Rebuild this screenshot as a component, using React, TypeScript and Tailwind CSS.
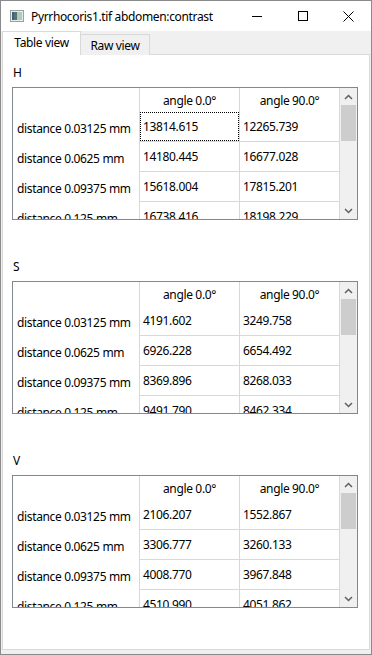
import React from "react";

type Sec = { label: string; rows: [string, string, string][] };

const sections: Sec[] = [
  {
    label: "H",
    rows: [
      ["distance 0.03125 mm", "13814.615", "12265.739"],
      ["distance 0.0625 mm", "14180.445", "16677.028"],
      ["distance 0.09375 mm", "15618.004", "17815.201"],
      ["distance 0.125 mm", "16738.416", "18198.229"],
    ],
  },
  {
    label: "S",
    rows: [
      ["distance 0.03125 mm", "4191.602", "3249.758"],
      ["distance 0.0625 mm", "6926.228", "6654.492"],
      ["distance 0.09375 mm", "8369.896", "8268.033"],
      ["distance 0.125 mm", "9491.790", "8462.334"],
    ],
  },
  {
    label: "V",
    rows: [
      ["distance 0.03125 mm", "2106.207", "1552.867"],
      ["distance 0.0625 mm", "3306.777", "3260.133"],
      ["distance 0.09375 mm", "4008.770", "3967.848"],
      ["distance 0.125 mm", "4510.990", "4051.862"],
    ],
  },
];

function Table({ sec, focus }: { sec: Sec; focus: boolean }) {
  return (
    <div className="flex h-[133px] w-[346px] border border-[#828790] bg-white overflow-hidden">
      <div className="flex flex-col w-[327px] overflow-hidden">
        <div className="flex h-[24px] shrink-0">
          <div className="w-[127px] border-r border-[#d8d8d8]" />
          <div className="w-[100px] border-r border-[#d8d8d8] flex items-center justify-center pt-[2px]">angle 0.0°</div>
          <div className="w-[100px] border-r border-[#d8d8d8] flex items-center justify-center pt-[2px]">angle 90.0°</div>
        </div>
        {sec.rows.map((r, i) => (
          <div key={i} className="flex h-[30px] shrink-0">
            <div className="w-[127px] border-r border-[#d8d8d8] flex items-center pl-[4px] pt-[3px] whitespace-nowrap">{r[0]}</div>
            <div className="w-[100px] border-r border-b border-[#d8d8d8] relative flex items-center pl-[3px] pt-[1px]">
              {focus && i === 0 && (
                <div className="absolute left-0 top-0 w-[99px] h-[29px] border border-dotted border-black" />
              )}
              {r[1]}
            </div>
            <div className="w-[100px] border-r border-b border-[#d8d8d8] flex items-center pl-[3px] pt-[1px]">{r[2]}</div>
          </div>
        ))}
      </div>
      <div className="w-[17px] flex flex-col bg-[#f0f0f0]">
        <div className="h-[17px] flex items-center justify-center">
          <svg width="9" height="6" viewBox="0 0 9 6">
            <path d="M1 5 L4.5 1.5 L8 5" stroke="#606060" strokeWidth="1.5" fill="none" />
          </svg>
        </div>
        <div className="h-[36px] mx-[1px] bg-[#cdcdcd]" />
        <div className="flex-1" />
        <div className="h-[17px] flex items-center justify-center">
          <svg width="9" height="6" viewBox="0 0 9 6">
            <path d="M1 1 L4.5 4.5 L8 1" stroke="#606060" strokeWidth="1.5" fill="none" />
          </svg>
        </div>
      </div>
    </div>
  );
}

export default function App() {
  return (
    <div
      className="w-[372px] h-[655px] flex flex-col border border-[#8a8a8a] bg-[#f0f0f0] text-black text-[12px] tracking-[-0.35px] overflow-hidden"
      style={{ fontFamily: '"Noto Sans", "Open Sans", sans-serif' }}
    >
      <div className="h-[30px] shrink-0 bg-white flex items-center">
        <div className="w-[29px] flex items-center justify-center pl-[3px]">
          <svg width="14" height="12" viewBox="0 0 14 12">
            <rect x="0.5" y="0.5" width="13" height="11" fill="#e8ecec" stroke="#9aa0a0" />
            <rect x="2" y="2" width="5" height="8" fill="#5a7080" />
            <rect x="7" y="2" width="5" height="8" fill="#a8d0b8" />
            <rect x="2" y="2" width="2" height="8" fill="#40607a" />
          </svg>
        </div>
        <div className="flex-1 text-[12px] whitespace-nowrap pl-[1px] pt-[1px]">Pyrrhocoris1.tif abdomen:contrast</div>
        <div className="flex h-full">
          <div className="w-[46px] flex items-center justify-center">
            <svg width="10" height="10" viewBox="0 0 10 10">
              <path d="M0 5.5 H10" stroke="#000" strokeWidth="1" />
            </svg>
          </div>
          <div className="w-[46px] flex items-center justify-center">
            <svg width="10" height="10" viewBox="0 0 10 10">
              <rect x="0.5" y="0.5" width="9" height="9" stroke="#000" strokeWidth="1" fill="none" />
            </svg>
          </div>
          <div className="w-[45px] flex items-center justify-center">
            <svg width="11" height="11" viewBox="0 0 11 11">
              <path d="M0.5 0.5 L10.5 10.5 M10.5 0.5 L0.5 10.5" stroke="#000" strokeWidth="1" />
            </svg>
          </div>
        </div>
      </div>
      <div className="flex-1 flex flex-col px-[1px] pb-[4px]">
        <div className="flex h-[24px] shrink-0 items-end relative z-10">
          <div className="h-[24px] w-[79px] bg-white border border-b-0 border-[#d9d9d9] flex items-center justify-center pb-[1px]">Table view</div>
          <div className="h-[21px] w-[69px] bg-[#f0f0f0] border border-l-0 border-[#d9d9d9] border-b-0 flex items-center justify-center pt-[1px]">Raw view</div>
        </div>
        <div className="flex-1 -mt-[1px] bg-white border border-[#d9d9d9] flex flex-col pl-[9px] pt-[11px]">
          {sections.map((s, i) => (
            <div key={s.label} className={i === 0 ? "flex flex-col" : "flex flex-col mt-[40px]"}>
              <div className="h-[14px] leading-[14px] pl-[1px]">{s.label}</div>
              <div className="mt-[7px]">
                <Table sec={s} focus={i === 0} />
              </div>
            </div>
          ))}
        </div>
      </div>
    </div>
  );
}
